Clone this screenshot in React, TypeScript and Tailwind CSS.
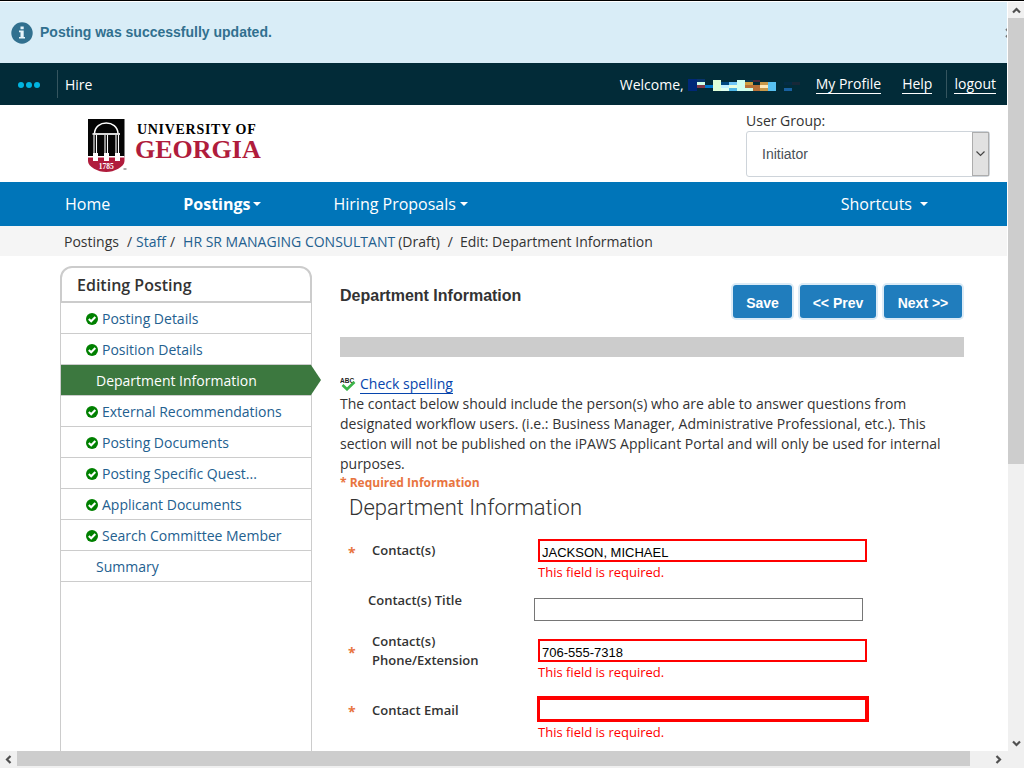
import React from "react";

const MENU = [
  { label: "Posting Details", done: true },
  { label: "Position Details", done: true },
  { label: "Department Information", active: true },
  { label: "External Recommendations", done: true },
  { label: "Posting Documents", done: true },
  { label: "Posting Specific Quest...", done: true },
  { label: "Applicant Documents", done: true },
  { label: "Search Committee Member", done: true },
  { label: "Summary" },
];

const MOSAIC: [number, number, number, number, string][] = [
  [0, 5, 9, 12, "#002878"], [9, 5, 8, 3, "#08346c"], [9, 8, 8, 3, "#d0ffe8"], [9, 11, 8, 3, "#803848"],
  [17, 11, 8, 3, "#0078d0"], [25, 6, 8, 11, "#e0ffd8"], [33, 8, 8, 3, "#004880"], [33, 11, 8, 3, "#c0f0ff"],
  [33, 14, 8, 3, "#e0fff0"], [41, 8, 8, 3, "#70c8f8"], [41, 11, 8, 3, "#e8ffe0"], [41, 14, 8, 3, "#50b8e8"],
  [49, 6, 8, 11, "#d0fff0"], [57, 6, 8, 2, "#083850"], [57, 8, 8, 3, "#d0a040"], [57, 11, 8, 3, "#b87038"],
  [57, 14, 8, 3, "#d0ffe8"], [65, 6, 7, 2, "#482838"], [65, 11, 7, 6, "#b87038"], [72, 8, 8, 3, "#c89848"],
  [72, 11, 8, 3, "#ffe8b8"], [72, 14, 8, 3, "#c89848"], [80, 8, 8, 9, "#58c0f0"], [96, 8, 8, 3, "#042c44"],
  [96, 14, 8, 3, "#1860a0"], [104, 8, 8, 3, "#182838"],
];

function Caret() {
  return (
    <svg width="8" height="4" viewBox="0 0 8 4" aria-hidden="true">
      <path d="M0 0H8L4 4Z" fill="white" />
    </svg>
  );
}

function Chevron({ d }: { d: string }) {
  return (
    <svg width="9" height="9" viewBox="0 0 9 9" fill="none" stroke="#505050" strokeWidth="2.200" aria-hidden="true">
      <path d={d} />
    </svg>
  );
}

function Check() {
  return (
    <svg width="12" height="12" viewBox="0 0 12 12" aria-hidden="true">
      <circle cx="6" cy="6" r="6" fill="#008000" />
      <path d="M2.800 5.900L5.200 8.200L9.300 4.100" fill="none" stroke="white" strokeWidth="2.100" />
    </svg>
  );
}

function Logo() {
  return (
    <a href="#" aria-label="University of Georgia" className="flex items-start">
      <svg width="40" height="56" viewBox="0 0 40 56" aria-hidden="true">
        <path d="M0 0H36.500V38H0Z" fill="#050505" />
        <path d="M0 37H36.500V42C36.500 48 26 53 18.200 53C10 53 0 48 0 42Z" fill="#b01c3c" />
        <g fill="none" stroke="white">
          <path d="M6.500 14.500C7 0.500 29.500 0.500 30 14.500" strokeWidth="1.500" />
          <path d="M4.500 15H32" strokeWidth="1.700" />
          <path d="M6 16V36M8.500 16V36M17 16V36M19.500 16V36M28 16V36M30.500 16V36" strokeWidth="1.100" />
        </g>
        <path d="M0 37H5V34H10V37H16V34H21V37H27V34H32V37H36.500V38.500H32V42H27V38.500H21V42H16V38.500H10V42H5V38.500H0Z" fill="white" />
        <text x="18.200" y="50" textAnchor="middle" fontFamily="Liberation Serif" fontWeight="bold" fontSize="7.500" fill="white">1785</text>
        <path d="M35.500 50H38.500" stroke="#555" strokeWidth="1" />
      </svg>
      <span className="ml-[7px] mt-[3px] flex flex-col font-['Liberation_Serif',serif] font-bold">
        <span className="ml-0.5 text-[14px] leading-4 tracking-wider text-black">UNIVERSITY OF</span>
        <span className="text-[26px] leading-6 text-[#b01c3c]">GEORGIA</span>
      </span>
    </a>
  );
}

const LABEL = "font-semibold text-[13px] leading-[19px] text-[#333333]";
const INPUT = "block h-[23px] w-[329px] px-0.5 pt-[3px] font-['Liberation_Sans',sans-serif] text-[13px] text-black outline-none";

function Field(props: { id: string; label: string; value?: string; row: string; labelClass: string; starClass: string; boxClass: string }) {
  return (
    <div className={"flex items-start " + props.row}>
      <span className={"w-6 pl-2 text-[14px] leading-[19px] font-bold text-[#e87440] " + props.starClass}>*</span>
      <label htmlFor={props.id} className={LABEL + " ml-2 w-[150px] " + props.labelClass}>{props.label}</label>
      <div className="ml-4">
        <input id={props.id} type="text" defaultValue={props.value} className={INPUT + " " + props.boxClass} />
        <p className="text-[13px] leading-5 text-[#ff0000]">This field is required.</p>
      </div>
    </div>
  );
}

const BUTTON = "h-[33px] rounded-[3px] bg-[#207dbd] pt-1 font-['Liberation_Sans',sans-serif] text-[14px] font-bold text-white ring-2 ring-[#dcebf6]";

export default function App() {
  return (
    <div className="flex h-screen flex-col overflow-hidden border-t border-black bg-white pt-px font-['Open_Sans',sans-serif] text-[14px] text-[#333333]">
      <div className="flex min-h-0 flex-1">
        <div className="mr-px flex min-w-0 flex-1 flex-col overflow-hidden">
          <div className="flex h-[61px] shrink-0 items-center bg-[#d9edf7] pl-[11px] text-[#31708f]">
            <svg width="22" height="22" viewBox="0 0 22 22" className="mr-[7px]" aria-hidden="true">
              <circle cx="11" cy="11" r="10.700" fill="#31708f" />
              <path d="M9.500 4.500H12.700V7.300H9.500ZM8 8.600H12.700V15H14V16.500H8V15H9.500V10.200H8Z" fill="#e8f5fb" />
            </svg>
            <p className="font-['Liberation_Sans',sans-serif] text-[14px] font-bold">Posting was successfully updated.</p>
            <button aria-label="Close" className="-mr-2 ml-auto">
              <svg width="10" height="10" viewBox="0 0 10 10" stroke="#777" strokeWidth="2"><path d="M1 1L9 9M9 1L1 9" /></svg>
            </button>
          </div>

          <div className="flex h-[42px] shrink-0 items-center bg-[#022b38] pr-[11px] text-white">
            <button aria-label="Apps" className="flex w-[57px] gap-[2px] pl-[18px] pt-0.5">
              <i className="size-[6px] rounded-full bg-[#00b4e0]" />
              <i className="size-[6px] rounded-full bg-[#00b4e0]" />
              <i className="size-[6px] rounded-full bg-[#00b4e0]" />
            </button>
            <span className="flex h-7 items-center border-l border-[#35555f] pl-[7px]">Hire</span>
            <span className="ml-auto">Welcome,</span>
            <svg width="112" height="20" viewBox="0 0 112 20" className="ml-1 mr-4" shapeRendering="crispEdges" aria-hidden="true">
              {MOSAIC.map(([x, y, w, h, fill], i) => <rect key={i} x={x} y={y} width={w} height={h} fill={fill} />)}
            </svg>
            <a href="#" className="border-b border-white leading-[18px]">My Profile</a>
            <a href="#" className="ml-[21px] border-b border-white leading-[18px]">Help</a>
            <span className="ml-[14px] flex h-7 items-center border-l border-[#35555f] pl-[7px]">
              <a href="#" className="border-b border-white leading-[18px]">logout</a>
            </span>
          </div>

          <header className="flex h-[77px] shrink-0 items-start justify-between pl-[88px] pr-[17px]">
            <div className="pt-[14px]"><Logo /></div>
            <div className="w-[244px] pt-[6px]">
              <label htmlFor="group" className="block leading-5">User Group:</label>
              <div className="relative h-[46px] rounded-[3px] border border-[#ced4da]">
                <select id="group" className="h-full w-full appearance-none bg-transparent pl-[15px] font-['Liberation_Sans',sans-serif] text-[14px] font-medium text-[#495057]">
                  <option>Initiator</option>
                </select>
                <span className="pointer-events-none absolute inset-y-0 right-0 flex w-[17px] items-center justify-center border border-[#adadad] bg-[#e1e1e1]">
                  <svg width="9" height="6" viewBox="0 0 9 6" fill="none" stroke="#444" strokeWidth="1.200"><path d="M0.500 0.500L4.500 4.500L8.500 0.500" /></svg>
                </span>
              </div>
            </div>
          </header>

          <nav className="flex h-[44px] shrink-0 items-center bg-[#0075b9] pl-[65px] pr-[79px] text-[16px] text-white">
            <a href="#">Home</a>
            <a href="#" className="ml-[73px] flex items-center gap-[3px] font-bold">Postings<Caret /></a>
            <a href="#" className="ml-[72px] flex items-center gap-1">Hiring Proposals<Caret /></a>
            <a href="#" className="ml-auto flex items-center gap-2">Shortcuts<Caret /></a>
          </nav>

          <div className="flex h-[30px] shrink-0 items-center bg-[#f5f5f5] pl-[64px]">
            <span>Postings</span>
            <span className="ml-2">/</span>
            <a href="#" className="ml-1 text-[#23608f]">Staff</a>
            <span className="ml-1">/</span>
            <a href="#" className="ml-2 text-[#23608f]">HR SR MANAGING CONSULTANT</a>
            <span className="ml-[3px]">(Draft)</span>
            <span className="ml-2">/</span>
            <span className="ml-[7px]">Edit: Department Information</span>
          </div>

          <div className="flex min-h-0 flex-1 pl-[60px] pr-[43px] pt-[10px]">
            <aside className="flex w-[252px] shrink-0 flex-col">
              <h2 className="flex h-[37px] shrink-0 items-center rounded-t-xl border-2 border-[#cccccc] pl-[15px] text-[16px] font-semibold">Editing Posting</h2>
              <ul className="flex-1 border-x border-[#cccccc]">
                {MENU.map((item) => (
                  <li key={item.label} className={"relative h-[31px] border-b border-[#cccccc] " + (item.active ? "bg-[#3c783f] text-white" : "text-[#23608f]")}>
                    <a href="#" className={"flex h-full items-center gap-1 " + (item.done ? "pl-[25px]" : "pl-[35px]")}>
                      {item.done && <span className="pt-0.5"><Check /></span>}
                      {item.label}
                    </a>
                    {item.active && (
                      <svg width="10" height="30" viewBox="0 0 10 30" className="absolute -right-[10px] top-0" aria-hidden="true">
                        <path d="M0 0L10 15L0 30Z" fill="#3c783f" />
                      </svg>
                    )}
                  </li>
                ))}
              </ul>
            </aside>

            <main className="ml-7 min-w-0 flex-1">
              <div className="flex h-[52px] items-start pt-[19px]">
                <h1 className="font-['Liberation_Sans',sans-serif] text-[16px] font-bold leading-[21px]">Department Information</h1>
                <div className="ml-auto flex gap-2 pr-0.5">
                  <button className={BUTTON + " w-[59px]"}>Save</button>
                  <button className={BUTTON + " w-[76px]"}>&lt;&lt; Prev</button>
                  <button className={BUTTON + " w-[78px]"}>Next &gt;&gt;</button>
                </div>
              </div>
              <div className="mt-[19px] h-5 bg-[#cccccc]" />
              <div className="mt-[17px] flex h-5 items-center">
                <svg width="16" height="14" viewBox="0 0 16 14" className="mr-1" aria-hidden="true">
                  <text x="0" y="6" fontFamily="Liberation Sans" fontWeight="bold" fontSize="6.500" fill="#222">ABC</text>
                  <path d="M2.500 8L7 12.300L14.500 5" fill="none" stroke="#3cb54a" strokeWidth="2.600" />
                </svg>
                <a href="#" className="border-b border-[#0645ad] leading-[18px] text-[#0645ad]">Check spelling</a>
              </div>
              <p className="leading-5">The contact below should include the person(s) who are able to answer questions from designated workflow users. (i.e.: Business Manager, Administrative Professional, etc.). This section will not be published on the iPAWS Applicant Portal and will only be used for internal purposes.</p>
              <p className="text-[12px] font-bold leading-[18px] text-[#e87440]">* Required Information</p>
              <h2 className="pl-[9px] font-['Roboto',sans-serif] text-[22px] font-light leading-8">Department Information</h2>

              <form className="mt-[15px]" onSubmit={(e) => e.preventDefault()}>
                <Field id="contacts" label="Contact(s)" value="JACKSON, MICHAEL" row="h-[59px]" labelClass="pt-[2px]" starClass="pt-1" boxClass="border-2 border-[#ff0000]" />
                <div className="flex h-[41px] items-start pl-7">
                  <label htmlFor="title" className={LABEL + " -mt-[7px] w-[150px]"}>Contact(s) Title</label>
                  <input id="title" type="text" className={INPUT + " ml-4 border border-[#767676]"} />
                </div>
                <Field id="phone" label="Contact(s) Phone/Extension" value="706-555-7318" row="h-[57px]" labelClass="-mt-[7px] pr-8" starClass="pt-1" boxClass="border-2 border-[#ff0000]" />
                <Field id="email" label="Contact Email" row="h-[55px]" labelClass="pt-[5px]" starClass="pt-[6px]" boxClass="-ml-px h-[26px] w-[332px] border-[#ff0000] border-t-4 border-r-4 border-b-[3px] border-l-[3px]" />
              </form>
            </main>
          </div>
        </div>

        <div className="flex w-4 shrink-0 flex-col items-center bg-[#f0f0f0]" aria-hidden="true">
          <div className="flex h-4 items-center"><Chevron d="M1 6.500L4.500 3L8 6.500" /></div>
          <div className="h-[446px] w-full bg-[#cdcdcd]" />
          <div className="mt-auto flex h-4 items-center"><Chevron d="M1 2.500L4.500 6L8 2.500" /></div>
        </div>
      </div>

      <div className="flex h-[17px] shrink-0 bg-[#f0f0f0]" aria-hidden="true">
        <div className="flex w-[17px] items-center justify-center"><Chevron d="M6.500 1L3 4.500L6.500 8" /></div>
        <div className="mb-0.5 mr-[20px] flex-1 bg-[#cdcdcd]" />
        <div className="mr-[17px] flex w-[17px] items-center justify-center"><Chevron d="M2.500 1L6 4.500L2.500 8" /></div>
      </div>
    </div>
  );
}
